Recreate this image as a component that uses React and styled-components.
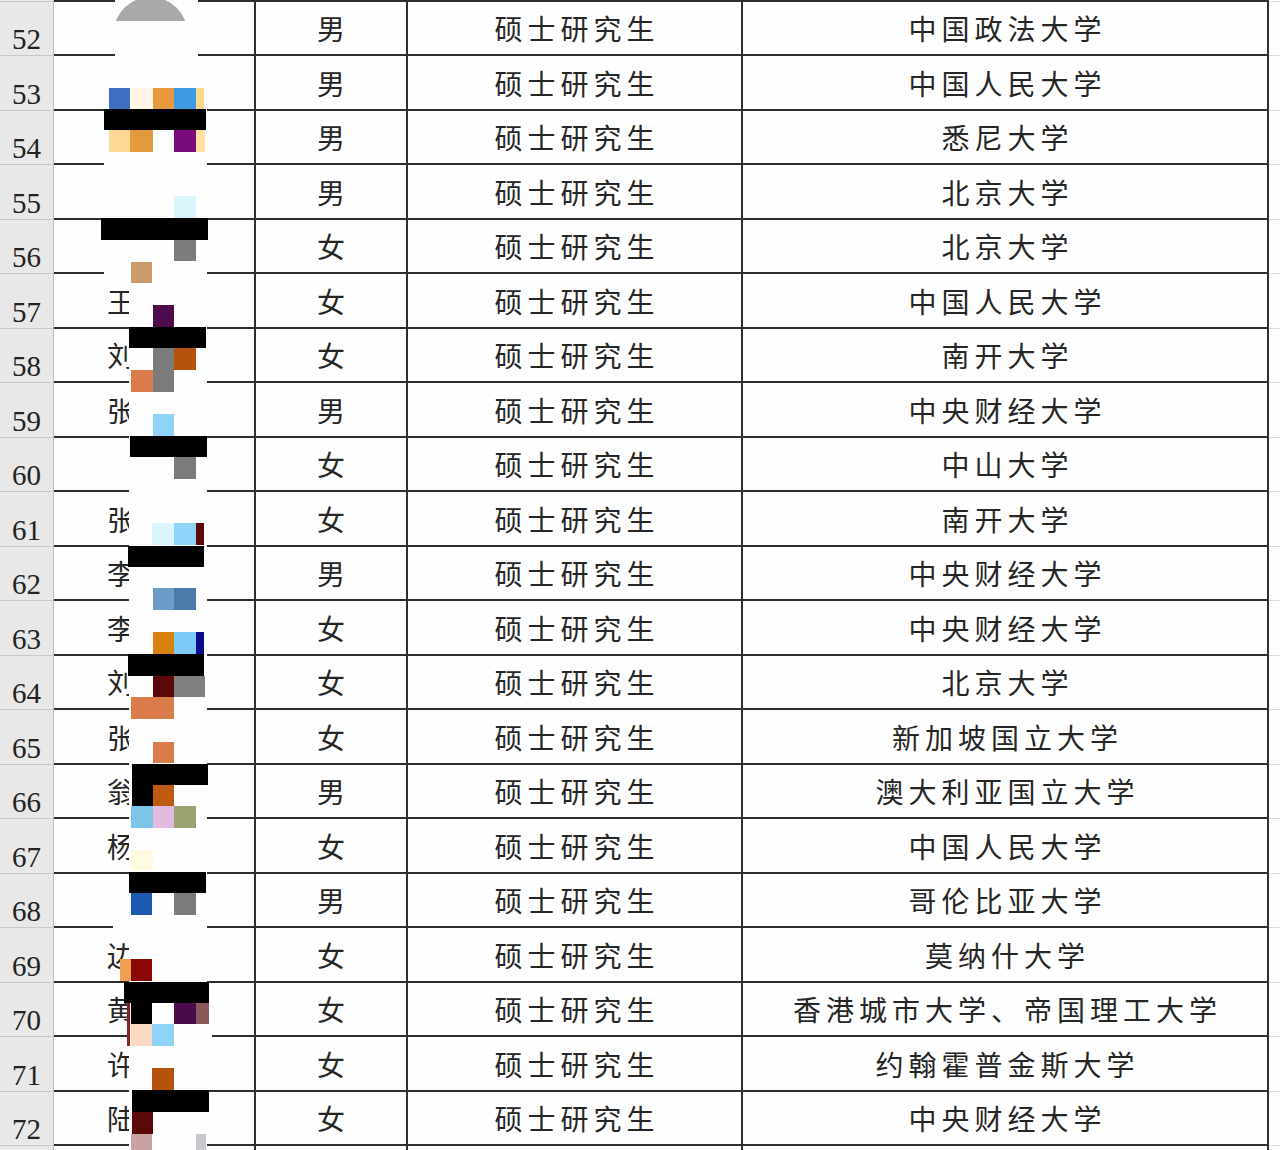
import React from "react";
import styled, { createGlobalStyle } from "styled-components";

const GlobalStyle = createGlobalStyle`
  body {
    margin: 0;
    background: #fefefe;
  }
`;

const Page = styled.div`
  position: relative;
  width: 1280px;
  height: 1150px;
  overflow: hidden;
  background: #fefefe;
`;

const Sheet = styled.div`
  margin-top: -53px;
`;

const Row = styled.div`
  display: grid;
  grid-template-columns: 54px 202px 152px 335px 526px 1fr;
  height: 54.5px;
`;

const RowHead = styled.div`
  box-sizing: border-box;
  display: flex;
  align-items: flex-end;
  justify-content: center;
  padding-bottom: 1px;
  background: #e8e8e8;
  border-right: 1px solid #bdbdbd;
  border-bottom: 1px solid #c9c9c9;
  font-family: "Liberation Serif", "DejaVu Serif", serif;
  font-size: 29px;
  line-height: 29px;
  color: #222;
`;

const Cell = styled.div`
  box-sizing: border-box;
  display: flex;
  align-items: center;
  justify-content: ${(p) => (p.$left ? "flex-start" : "center")};
  padding-top: 1px;
  padding-left: ${(p) => (p.$left ? "53px" : "5px")};
  border-right: 2px solid #2e2e2e;
  border-bottom: 2px solid #2e2e2e;
  font-family: "Noto Sans CJK SC", "Noto Sans", sans-serif;
  font-size: 28px;
  line-height: 1;
  letter-spacing: 5px;
  color: #262626;
  white-space: nowrap;
`;

const Filler = styled.div`
  border-bottom: 1px solid #dcdcdc;
`;

const Mosaic = styled.svg`
  position: absolute;
  top: 0;
  left: 0;
`;

// first and last rows only peek in at the edges, so their numbers stay hidden
const rows = [
  ["r51", "", "", "", "", ""],
  ["r52", 52, "", "男", "硕士研究生", "中国政法大学"],
  ["r53", 53, "", "男", "硕士研究生", "中国人民大学"],
  ["r54", 54, "", "男", "硕士研究生", "悉尼大学"],
  ["r55", 55, "", "男", "硕士研究生", "北京大学"],
  ["r56", 56, "", "女", "硕士研究生", "北京大学"],
  ["r57", 57, "王", "女", "硕士研究生", "中国人民大学"],
  ["r58", 58, "刘", "女", "硕士研究生", "南开大学"],
  ["r59", 59, "张", "男", "硕士研究生", "中央财经大学"],
  ["r60", 60, "", "女", "硕士研究生", "中山大学"],
  ["r61", 61, "张", "女", "硕士研究生", "南开大学"],
  ["r62", 62, "李", "男", "硕士研究生", "中央财经大学"],
  ["r63", 63, "李", "女", "硕士研究生", "中央财经大学"],
  ["r64", 64, "刘", "女", "硕士研究生", "北京大学"],
  ["r65", 65, "张", "女", "硕士研究生", "新加坡国立大学"],
  ["r66", 66, "翁", "男", "硕士研究生", "澳大利亚国立大学"],
  ["r67", 67, "杨", "女", "硕士研究生", "中国人民大学"],
  ["r68", 68, "", "男", "硕士研究生", "哥伦比亚大学"],
  ["r69", 69, "边", "女", "硕士研究生", "莫纳什大学"],
  ["r70", 70, "黄", "女", "硕士研究生", "香港城市大学、帝国理工大学"],
  ["r71", 71, "许", "女", "硕士研究生", "约翰霍普金斯大学"],
  ["r72", 72, "陆", "女", "硕士研究生", "中央财经大学"],
  ["r73", "", "", "", "", ""],
];

// white cover over the name column
const masks = [
  [115, 0, 83, 60],
  [104, 60, 103, 215],
  [129, 275, 78, 875],
  [113, 920, 94, 14],
  [129, 1030, 83, 12],
];

// pixelated blocks: x, y, w, h, colour
const blocks = [
  [109, 88, 21, 21, "#3f6fc0"], [130, 88, 23, 21, "#fff6e6"], [153, 88, 21, 21, "#e8993d"],
  [174, 88, 22, 21, "#3d9be2"], [196, 88, 8, 21, "#fcd88c"],
  [104, 109, 102, 21, "#000"],
  [109, 130, 21, 22, "#fdd995"], [130, 130, 23, 22, "#e49b3c"], [174, 130, 22, 22, "#7a0b7c"],
  [196, 130, 9, 22, "#fde0a0"],
  [174, 196, 22, 22, "#dbf5fd"],
  [101, 218, 107, 22, "#000"],
  [174, 240, 22, 21, "#7b7b7b"],
  [131, 262, 21, 21, "#c99a6c"],
  [153, 305, 21, 22, "#4e0b4e"],
  [129, 327, 77, 21, "#000"],
  [153, 348, 21, 22, "#7b7b7b"], [174, 348, 22, 22, "#b5530d"],
  [131, 370, 22, 22, "#d97b4b"], [153, 370, 21, 22, "#7b7b7b"],
  [153, 414, 21, 22, "#8fd4f8"],
  [130, 436, 77, 21, "#000"],
  [174, 457, 22, 22, "#7b7b7b"],
  [152, 523, 22, 22, "#dbf5fd"], [174, 523, 22, 22, "#8fd4f8"], [196, 523, 8, 22, "#5a0a0a"],
  [128, 546, 76, 21, "#000"],
  [153, 588, 21, 22, "#6b9dc9"], [174, 588, 22, 22, "#4b7ba9"],
  [153, 632, 21, 22, "#d9810f"], [174, 632, 22, 22, "#7dc9f8"], [196, 632, 8, 22, "#0b0b8b"],
  [128, 654, 76, 22, "#000"],
  [153, 676, 21, 21, "#5b0808"], [174, 676, 31, 21, "#7f7f7f"],
  [131, 697, 43, 22, "#d97b4b"],
  [153, 742, 21, 21, "#d97b4b"],
  [132, 764, 76, 21, "#000"],
  [132, 785, 21, 21, "#000"], [153, 785, 21, 21, "#c05a10"],
  [131, 806, 22, 22, "#7cc4e8"], [153, 806, 21, 22, "#e2badf"], [174, 806, 22, 22, "#9ca272"],
  [131, 850, 22, 20, "#fffbe0"],
  [129, 872, 77, 21, "#000"],
  [131, 893, 21, 22, "#1a5bb1"], [174, 893, 22, 22, "#7b7b7b"],
  [120, 959, 11, 22, "#f0a050"], [131, 959, 21, 22, "#8a0808"],
  [124, 982, 85, 21, "#000"],
  [131, 1003, 21, 21, "#000"], [174, 1003, 22, 21, "#4b0b4b"], [196, 1003, 13, 21, "#8a5a5a"],
  [131, 1024, 21, 22, "#fcd8c2"], [152, 1024, 22, 22, "#8fd4f8"],
  [127, 1003, 3, 43, "#8a2020"],
  [152, 1068, 22, 22, "#b5530d"],
  [132, 1090, 77, 22, "#000"],
  [132, 1112, 21, 22, "#5b0808"],
  [131, 1134, 21, 16, "#c9a2a2"], [196, 1134, 10, 16, "#c8c8d0"],
];

const App = () => {
  return (
    <Page>
      <GlobalStyle />
      <Sheet>
        {rows.map(([key, num, name, sex, degree, school]) => (
          <Row key={key}>
            <RowHead>{num}</RowHead>
            <Cell $left>{name}</Cell>
            <Cell>{sex}</Cell>
            <Cell>{degree}</Cell>
            <Cell>{school}</Cell>
            <Filler />
          </Row>
        ))}
      </Sheet>
      <Mosaic width="260" height="1150" viewBox="0 0 260 1150">
        <defs>
          <clipPath id="domeClip">
            <rect x="100" y="0" width="100" height="21" />
          </clipPath>
        </defs>
        {masks.map(([x, y, w, h], i) => (
          <rect key={"m" + i} x={x} y={y} width={w} height={h} fill="#fefefe" />
        ))}
        <circle cx="150.5" cy="34" r="37" fill="#a9a9a9" clipPath="url(#domeClip)" />
        {blocks.map(([x, y, w, h, c], i) => (
          <rect key={"b" + i} x={x} y={y} width={w} height={h} fill={c} />
        ))}
      </Mosaic>
    </Page>
  );
};

export default App;
